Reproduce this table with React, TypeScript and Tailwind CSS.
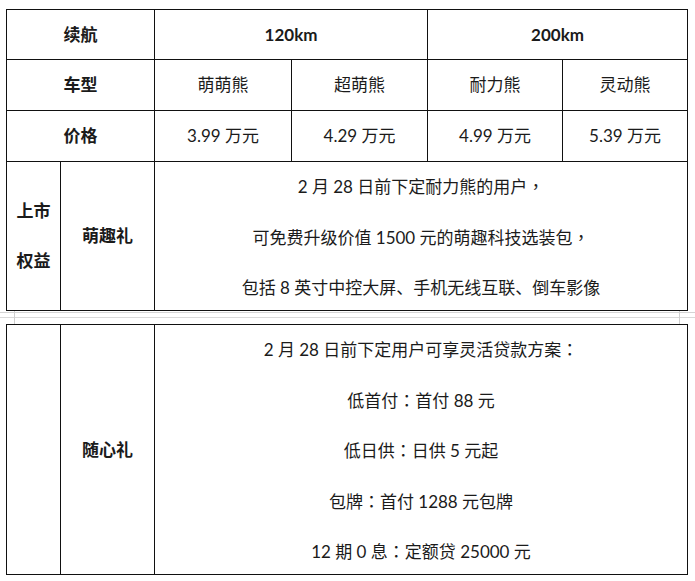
const FONT = "font-['Lato','Noto_Sans_CJK_SC',sans-serif]";

const MODELS = [
  { name: "萌萌熊", price: "3.99 万元" },
  { name: "超萌熊", price: "4.29 万元" },
  { name: "耐力熊", price: "4.99 万元" },
  { name: "灵动熊", price: "5.39 万元" },
];

const GIFT_LINES = [
  "2 月 28 日前下定耐力熊的用户，",
  "可免费升级价值 1500 元的萌趣科技选装包，",
  "包括 8 英寸中控大屏、手机无线互联、倒车影像",
];

const LOAN_LINES = [
  "2 月 28 日前下定用户可享灵活贷款方案：",
  "低首付：首付 88 元",
  "低日供：日供 5 元起",
  "包牌：首付 1288 元包牌",
  "12 期 0 息：定额贷 25000 元",
];

const COLS = "grid-cols-[53px_93px_136px_135px_134px_124px]";

// full-width comma / colon sit centred in the reference, like the TC cut
function Line({ text }: { text: string }) {
  const parts = text.split(/([，：])/);
  return (
    <span>
      {parts.map((p, i) =>
        p === "，" || p === "：" ? (
          <span key={i} className="font-['Noto_Sans_CJK_TC',sans-serif]">{p}</span>
        ) : (
          p
        )
      )}
    </span>
  );
}

function Cell({ className = "", children }: { className?: string; children?: React.ReactNode }) {
  return (
    <div className={`bg-white flex flex-col items-center justify-center text-center ${className}`}>
      {children}
    </div>
  );
}

function PageBreakLines() {
  return (
    <div className="flex-1 flex flex-col">
      <div className="h-px mt-[1px] bg-[#d4d4d4]" />
      <div className="h-px mt-[4px] bg-[#d9d9d9]" />
    </div>
  );
}

export default function App() {
  return (
    <div className={`w-[695px] h-[581px] bg-white text-[#1b1b1b] text-[17px] flex flex-col pt-[9px] ${FONT}`}>
      {/* first page part */}
      <div className={`ml-[6px] w-[682px] grid ${COLS} grid-rows-[49px_50px_50px_148px] gap-px p-px bg-[#111]`}>
        <Cell className="col-span-2 font-bold">续航</Cell>
        <Cell className="col-span-2 font-bold">120km</Cell>
        <Cell className="col-span-2 font-bold">200km</Cell>

        <Cell className="col-span-2 font-bold">车型</Cell>
        {MODELS.map((m) => (
          <Cell key={m.name}>{m.name}</Cell>
        ))}

        <Cell className="col-span-2 font-bold">价格</Cell>
        {MODELS.map((m) => (
          <Cell key={m.price}>{m.price}</Cell>
        ))}

        <Cell className="font-bold leading-[50px]">
          <span>上市</span>
          <span>权益</span>
        </Cell>
        <Cell className="font-bold">萌趣礼</Cell>
        <Cell className="col-span-4 leading-[50px] pt-[2px]">
          {GIFT_LINES.map((l) => (
            <Line key={l} text={l} />
          ))}
        </Cell>
      </div>

      {/* page break marks */}
      <div className="h-[13px] flex">
        <div className="w-[14px] flex"><PageBreakLines /></div>
        <div className="w-px bg-[#cfcfcf]" />
        <div className="w-[664px] flex"><PageBreakLines /></div>
        <div className="w-px bg-[#cfcfcf]" />
        <div className="flex-1 flex"><PageBreakLines /></div>
      </div>

      {/* second page part */}
      <div className={`ml-[6px] w-[682px] grid ${COLS} grid-rows-[249px] gap-px p-px bg-[#111]`}>
        <Cell />
        <Cell className="font-bold">随心礼</Cell>
        <Cell className="col-span-4 leading-[49.5px] pt-[2px]">
          {LOAN_LINES.map((l) => (
            <Line key={l} text={l} />
          ))}
        </Cell>
      </div>
    </div>
  );
}
